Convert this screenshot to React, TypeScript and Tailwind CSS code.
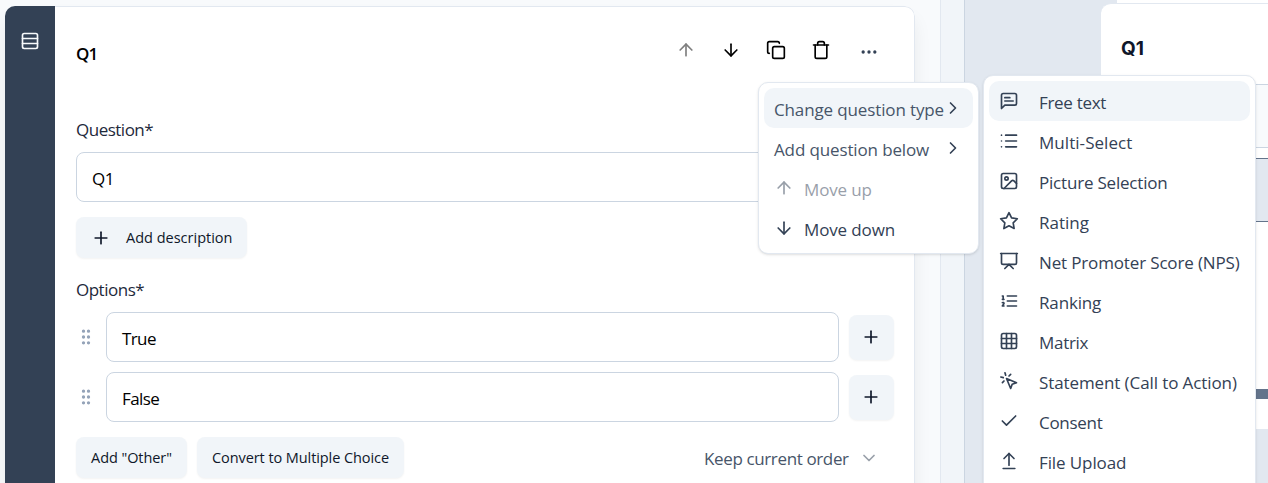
import React from "react";
import { ArrowDown, ArrowUp, ArrowUpFromLine, Check, ChevronDown, ChevronRight, Copy, Ellipsis, Grid3x3, GripVertical, List, Plus, Rows3 } from "lucide-react";

function Drawn({ children }: { children: React.ReactNode }) {
  return (
    <svg width="20" height="20" viewBox="0 0 24 24" fill="none" stroke="currentColor" strokeWidth="2" strokeLinecap="round" strokeLinejoin="round">
      {children}
    </svg>
  );
}

const questionTypes = [
  { label: "Free text", tracking: "tracking-[-0.3px]", icon: <Drawn><path d="M21 15a2 2 0 0 1-2 2H7l-4 4V5a2 2 0 0 1 2-2h14a2 2 0 0 1 2 2z" /><path d="M13 8H7" /><path d="M17 12H7" /></Drawn> },
  { label: "Multi-Select", tracking: "tracking-[0.05px]", icon: <List size={20} /> },
  { label: "Picture Selection", tracking: "tracking-[-0.2px]", icon: <Drawn><rect x="3" y="3" width="18" height="18" rx="2" /><circle cx="9" cy="9" r="2" /><path d="m21 15-3.086-3.086a2 2 0 0 0-2.828 0L6 21" /></Drawn> },
  { label: "Rating", tracking: "tracking-[0px]", icon: <Drawn><polygon points="12 2 15.09 8.26 22 9.27 17 14.14 18.18 21.02 12 17.77 5.82 21.02 7 14.14 2 9.27 8.91 8.26 12 2" /></Drawn> },
  { label: "Net Promoter Score (NPS)", tracking: "tracking-[-0.15px]", icon: <Drawn><path d="M2 3h20" /><path d="M21 3v11a2 2 0 0 1-2 2H5a2 2 0 0 1-2-2V3" /><path d="m7 21 5-5 5 5" /></Drawn> },
  { label: "Ranking", tracking: "tracking-[-0.15px]", icon: <Drawn><path d="M10 6h11M10 12h11M10 18h11M4 6h1v4M4 10h2" /><path d="M6 18H4c0-1 2-2 2-3s-1-1.5-2-1" /></Drawn> },
  { label: "Matrix", tracking: "tracking-[-0.3px]", icon: <Grid3x3 size={20} /> },
  { label: "Statement (Call to Action)", tracking: "tracking-[-0.1px]", icon: <Drawn><path d="m9 9 5 12 1.8-5.2L21 14Z" /><path d="M7.2 2.2 8 5.1" /><path d="m5.1 8-2.9-.8" /><path d="M14 4.1 12 6" /><path d="m6 12-1.9 2" /></Drawn> },
  { label: "Consent", tracking: "tracking-[-0.3px]", icon: <Check size={20} /> },
  { label: "File Upload", tracking: "tracking-[-0.1px]", icon: <ArrowUpFromLine size={20} /> },
];

function Option({ value }: { value: string }) {
  return (
    <div className="flex h-[50px] items-center">
      <GripVertical size={20} className="mr-[10px] shrink-0 text-[#94a3b8]" />
      <div className="mr-[10px] flex h-[50px] w-[733px] items-center rounded-lg border border-[#cbd5e1] px-[15px] pt-[4px] text-[17px] tracking-[-0.6px] text-black">{value}</div>
      <button className="mt-px flex h-[45px] w-[45px] items-center justify-center rounded-lg bg-slate-100 pb-[2px] pr-px text-[#0f172a] shadow-xs">
        <Plus size={20} />
      </button>
    </div>
  );
}

function EditorCard() {
  return (
    <div className="ml-[5px] mt-[6px] flex h-[540px] w-[910px] shrink-0 overflow-hidden rounded-[10px] bg-white shadow-[0_12px_19px_-2px_rgba(0,0,0,0.08)]">
      <div className="flex w-[50px] shrink-0 justify-center bg-[#334155] pt-[25px] text-slate-50">
        <Rows3 size={20} />
      </div>
      <div className="flex flex-1 flex-col rounded-r-[10px] border-y border-r border-slate-200 pl-[21px] pr-[20px]">
        <div className="flex h-[112px] items-start justify-between">
          <h3 className="mt-[34px] text-[17px] font-semibold leading-[25px] tracking-[-0.8px] text-black">Q1</h3>
          <div className="mr-[15px] mt-[31px] flex items-center gap-[25px] text-black">
            <ArrowUp size={20} className="opacity-50" />
            <ArrowDown size={20} />
            <Copy size={20} />
            <Drawn><path d="M3 6h18" /><path d="M19 6v14a2 2 0 0 1-2 2H7a2 2 0 0 1-2-2V6" /><path d="M8 6V4a2 2 0 0 1 2-2h4a2 2 0 0 1 2 2v2" /></Drawn>
            <Ellipsis size={20} className="ml-[3px] mt-[4px] text-[#334155]" />
          </div>
        </div>
        <div className="h-[33px] text-[17px] leading-[22px] tracking-[-0.5px] text-[#1e293b]"><span>Question*</span></div>
        <div className="flex h-[50px] items-center rounded-lg border border-[#cbd5e1] px-[15px] pt-[4px] text-[17px] tracking-[-0.5px] text-black"><span>Q1</span></div>
        <button className="mt-[15px] flex h-[41px] w-[171px] items-center rounded-lg bg-slate-100 pl-[15px] text-[14.5px] tracking-[0px] text-[#0f172a] shadow-xs">
          <Plus size={20} className="mr-[15px]" />
          <span>Add description</span>
        </button>
        <div className="mt-[21px] h-[33px] text-[17px] leading-[22px] tracking-[-0.5px] text-[#1e293b]"><span>Options*</span></div>
        <div className="flex flex-col gap-[10px]">
          <Option value="True" />
          <Option value="False" />
        </div>
        <div className="mt-[15px] flex h-[41px] items-center text-[14.5px] tracking-[-0.08px] text-[#0f172a]">
          <button className="flex h-[41px] w-[111px] items-center justify-center rounded-lg bg-slate-100 shadow-xs"><span>Add "Other"</span></button>
          <button className="ml-[10px] flex h-[41px] w-[207px] items-center justify-center rounded-lg bg-slate-100 shadow-xs"><span>Convert to Multiple Choice</span></button>
          <div className="ml-auto mr-[15px] flex items-center text-[17px] tracking-[-0.37px] text-[#475569]">
            <span className="w-[155px] pt-[2px]">Keep current order</span>
            <ChevronDown size={20} className="text-[#334155] opacity-50" />
          </div>
        </div>
      </div>
    </div>
  );
}

function Preview() {
  return (
    <div className="flex flex-1 flex-col items-end bg-slate-200">
      <div className="h-[3px] w-[151px] bg-white" />
      <div className="flex h-[426px] w-[167px] flex-col rounded-tl-[10px] border-t border-slate-200 bg-white">
        <h2 className="h-[80px] pl-[20px] pt-[32px] font-['Inter','Open_Sans',sans-serif] text-[19px] font-bold leading-[26px] text-[#0f172a]">Q1</h2>
        <div className="h-[64px] border-y border-[#cbd5e1] bg-slate-50" />
        <div className="mt-[10px] h-[64px] border-y border-[#64748b] bg-slate-200" />
        <div className="mt-[167px] h-[10px] bg-[#64748b]" />
      </div>
    </div>
  );
}

export default function App() {
  return (
    <div className="relative flex h-[483px] w-[1268px] overflow-hidden font-['Open_Sans','Noto_Sans',sans-serif]">
      <div className="flex w-[940px] items-start bg-slate-50">
        <EditorCard />
      </div>
      <div className="w-[25px] border-l border-r border-l-slate-200 border-r-[#cbd5e1] bg-slate-100" />
      <Preview />

      <div className="absolute left-[758px] top-[82px] flex h-[172px] w-[221px] flex-col rounded-[10px] border border-slate-200 bg-white p-[5px] text-[17px] tracking-[-0.13px] text-[#475569] shadow-sm">
        <div className="flex h-[40px] items-center justify-between rounded-[10px] bg-slate-100 pl-[10px] pr-[10px]">
          <span className="whitespace-nowrap pt-[3px]">Change question type</span>
          <ChevronRight size={20} className="-ml-1 shrink-0 text-[#334155]" />
        </div>
        <div className="flex h-[40px] items-center justify-between pl-[10px] pr-[10px]">
          <span className="pt-[3px]">Add question below</span>
          <ChevronRight size={20} className="text-[#334155]" />
        </div>
        <div className="flex h-[40px] items-center pl-[10px] text-[#334155] opacity-50">
          <ArrowUp size={20} className="mr-[10px]" />
          <span className="pt-[3px]">Move up</span>
        </div>
        <div className="flex h-[40px] items-center pl-[10px] text-[#334155]">
          <ArrowDown size={20} className="mr-[10px]" />
          <span className="pt-[3px]">Move down</span>
        </div>
      </div>

      <div className="absolute left-[983px] top-[75px] flex h-[452px] w-[273px] flex-col rounded-[10px] border border-slate-200 bg-white p-[5px] text-[17px] text-[#334155] shadow-sm">
        {questionTypes.map((type, index) => (
          <div key={type.label} className={index === 0 ? "flex h-[40px] items-center rounded-[10px] bg-slate-100 pl-[10px]" : "flex h-[40px] items-center pl-[10px]"}>
            <span className="mr-[20px]">{type.icon}</span>
            <span className={`whitespace-nowrap pt-[3px] ${type.tracking}`}>{type.label}</span>
          </div>
        ))}
      </div>
    </div>
  );
}
